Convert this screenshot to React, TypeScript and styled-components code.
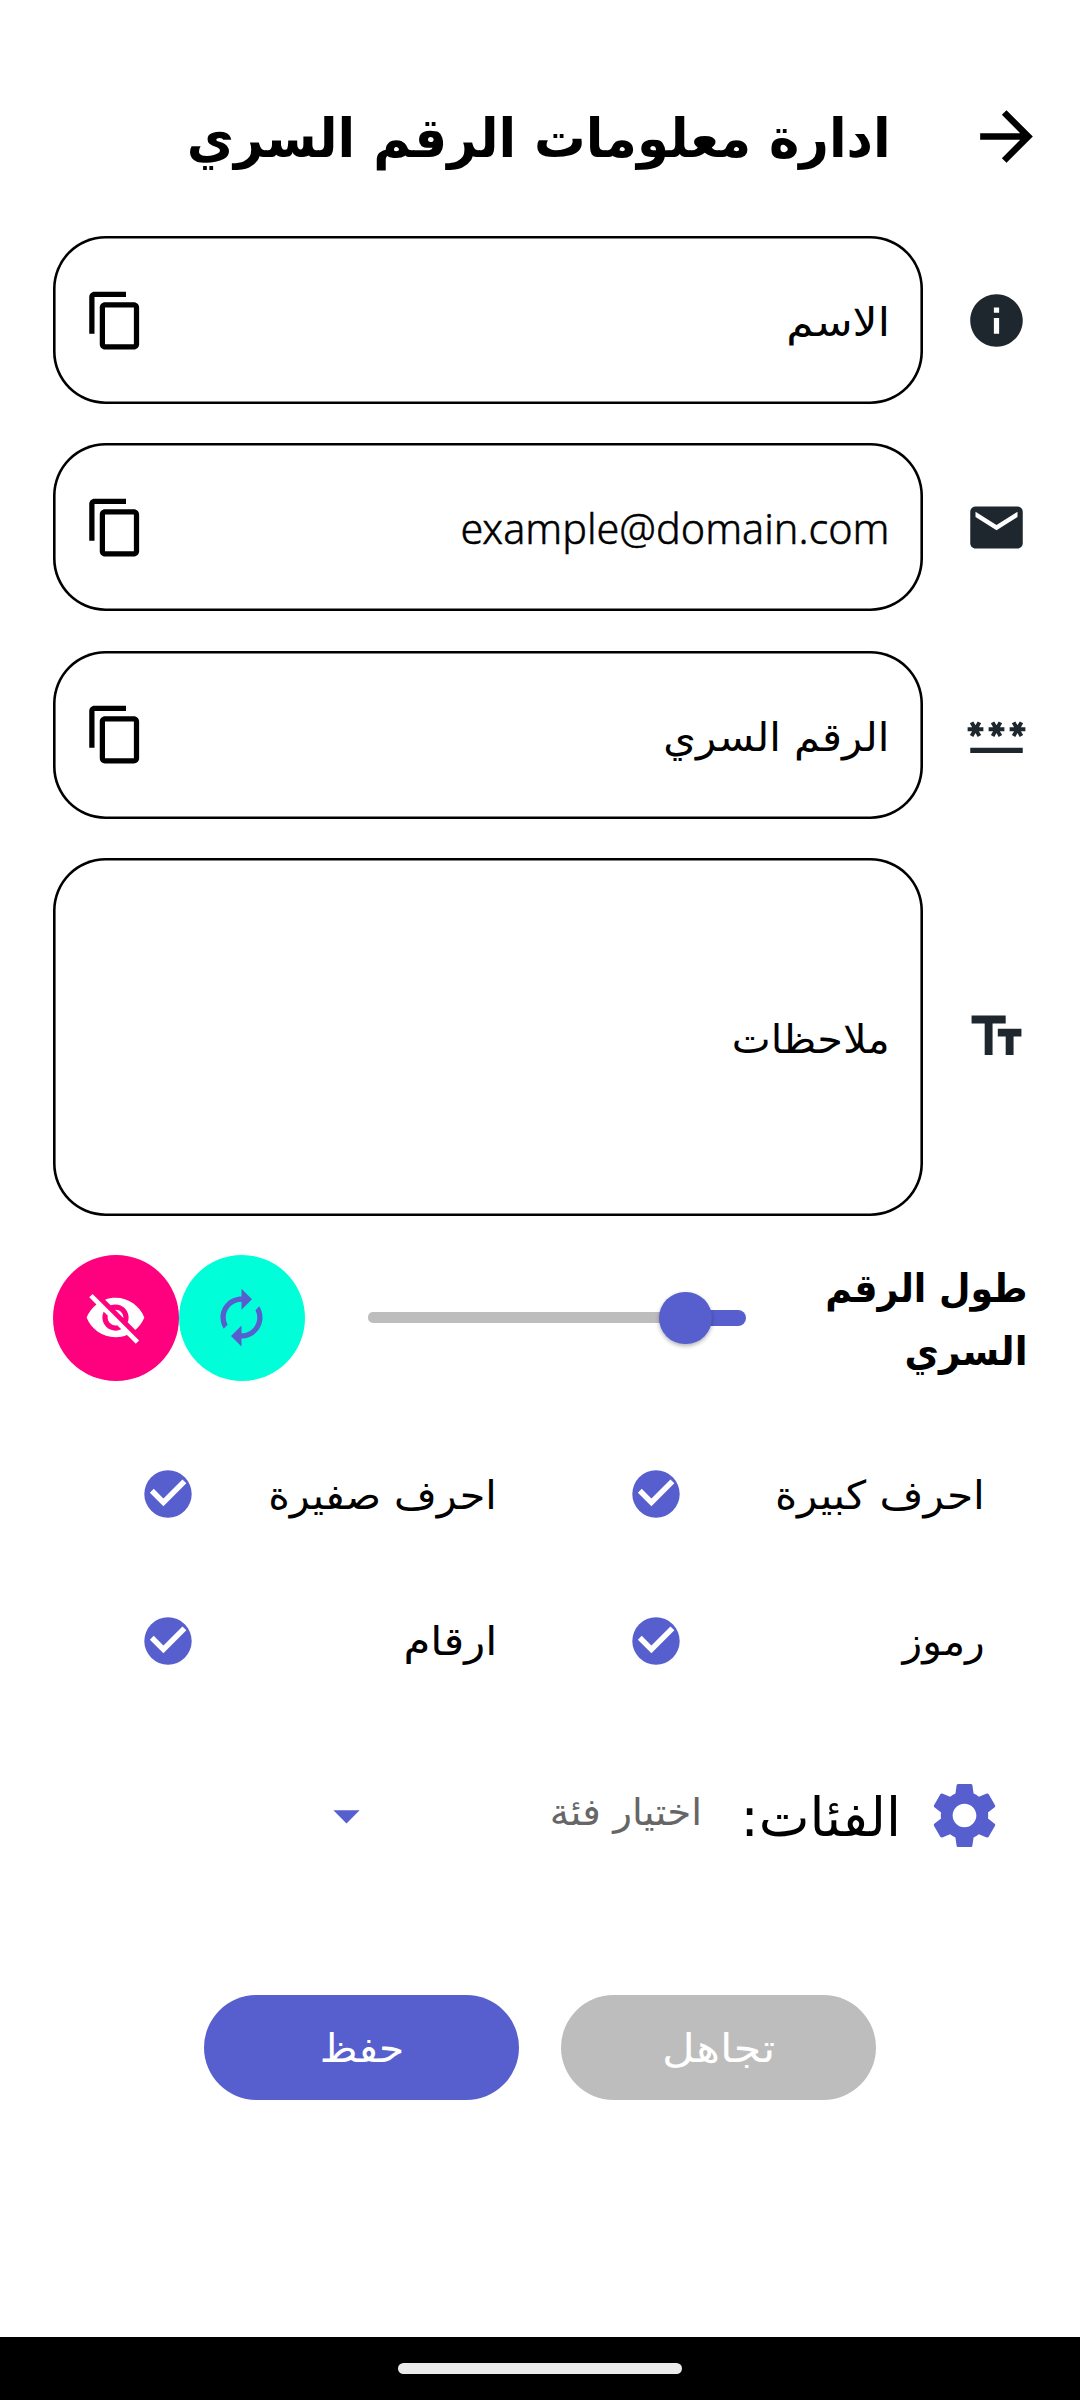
import React from 'react';
import styled, { createGlobalStyle } from 'styled-components';
import {
  MdArrowDropDown,
  MdArrowForward,
  MdAutorenew,
  MdContentCopy,
  MdEmail,
  MdInfo,
  MdPassword,
  MdSettings,
  MdTextFields,
  MdVisibilityOff,
} from 'react-icons/md';

const color = {
  accent: '#575fcf',
  pink: '#ff007f',
  mint: '#00ffd9',
  ink: '#1e272e',
  grey: '#bdbdbd',
  page: '#ffffff',
};

const GlobalStyle = createGlobalStyle`
  html, body { margin: 0; padding: 0; background: ${color.page}; }
  *, *::before, *::after { box-sizing: border-box; }
  svg { display: block; flex: none; }
`;

const Screen = styled.div`
  width: 1080px;
  height: 2400px;
  display: flex;
  flex-direction: column;
  overflow: hidden;
  direction: rtl;
  background: ${color.page};
  color: #000;
  font-family: 'DejaVu Sans', sans-serif;
`;

/* A single line of text; $stretch adjusts the glyph width, $drop the baseline. */
const Line = styled.span<{
  $size?: number;
  $bold?: boolean;
  $stretch?: number;
  $drop?: number;
  $centered?: boolean;
  $tone?: string;
}>`
  display: block;
  flex: none;
  margin: 0;
  white-space: nowrap;
  font-size: ${(p) => p.$size ?? 39.5}px;
  font-weight: ${(p) => (p.$bold ? 700 : 400)};
  line-height: 63px;
  color: ${(p) => p.$tone ?? 'inherit'};
  transform: translateY(${(p) => p.$drop ?? 0}px) scaleX(${(p) => p.$stretch ?? 1});
  transform-origin: ${(p) => (p.$centered ? 'center' : 'right')} center;
`;

const Latin = styled(Line)`
  font-family: 'Noto Sans', sans-serif;
  font-weight: 300;
  direction: ltr;
  -webkit-text-stroke: 0.5px currentColor;
`;

const TopBar = styled.header`
  height: 210px;
  padding: 63px 34px 0 52px;
  display: flex;
  align-items: center;
  gap: 76px;
`;

const Fields = styled.section`
  display: flex;
  flex-direction: column;
  gap: 39.4px;
  padding: 26px 52.5px 0;
`;

const FieldRow = styled.div`
  display: flex;
  align-items: center;
  gap: 42px;
  color: ${color.ink};
`;

const FieldBox = styled.div<{ $tall?: boolean }>`
  flex: 1;
  height: ${(p) => (p.$tall ? 357.4 : 168)}px;
  padding: 0 33px 0 31.5px;
  display: flex;
  align-items: center;
  justify-content: space-between;
  border-radius: 52.5px;
  box-shadow: inset 0 0 0 2.6px #000;
  color: #000;
`;

const LengthRow = styled.section`
  display: flex;
  align-items: center;
  height: 126px;
  margin-top: 39.2px;
  padding: 0 52.5px;
`;

const LengthLabel = styled.div`
  width: 218.5px;
`;

const Slider = styled.div`
  position: relative;
  display: flex;
  align-items: center;
  width: 378.5px;
  height: 63px;
  margin: 0 63px;
`;

const TrackActive = styled.div`
  height: 16px;
  border-radius: 0 8px 8px 0;
  background: ${color.accent};
`;

const TrackRest = styled.div`
  flex: 1;
  height: 11px;
  border-radius: 5px 0 0 5px;
  background: ${color.grey};
`;

const Thumb = styled.div`
  position: absolute;
  width: 52.5px;
  height: 52.5px;
  margin-right: -26.25px;
  border-radius: 50%;
  background: ${color.accent};
  box-shadow: 0 2px 4px rgba(0, 0, 0, 0.3);
`;

const RoundButton = styled.button<{ $fill: string; $tint: string }>`
  width: 126px;
  height: 126px;
  padding: 0;
  border: 0;
  border-radius: 50%;
  display: grid;
  place-items: center;
  background: ${(p) => p.$fill};
  color: ${(p) => p.$tint};
`;

const Options = styled.section`
  display: grid;
  grid-template-columns: 1fr 1fr;
  grid-auto-rows: 146.6px;
  margin-top: 40px;
  padding: 0 52.5px;
`;

const Option = styled.label`
  display: flex;
  align-items: center;
  justify-content: space-between;
  padding: 0 43px 0 91.5px;
`;

const CategoryRow = styled.section`
  display: flex;
  align-items: center;
  height: 204px;
  padding-right: 76px;
  color: ${color.accent};
`;

const CategoryTitle = styled.div`
  margin: 0 24px 0 38px;
  color: #000;
`;

const Select = styled.div`
  width: 387px;
  display: flex;
  align-items: center;
  justify-content: space-between;
`;

const Actions = styled.section`
  display: flex;
  justify-content: center;
  gap: 42px;
  margin-top: 77px;
`;

const PillButton = styled.button<{ $fill: string }>`
  width: 315px;
  height: 105px;
  padding: 0;
  border: 0;
  border-radius: 52.5px;
  display: flex;
  align-items: center;
  justify-content: center;
  font-family: inherit;
  color: #fff;
  background: ${(p) => p.$fill};
`;

const NavBar = styled.footer`
  display: flex;
  align-items: center;
  justify-content: center;
  height: 63px;
  margin-top: auto;
  background: #000;
`;

const NavHandle = styled.div`
  width: 284px;
  height: 11px;
  border-radius: 5.5px;
  background: #ebebeb;
`;

const CheckMark = () => (
  <svg width="48" height="48" viewBox="0 0 48 48">
    <circle cx="24" cy="24" r="23.7" fill={color.accent} />
    <polyline
      points="7.8,20.8 19.4,32.4 40.4,11.4"
      fill="none"
      stroke="#fff"
      strokeWidth="5.5"
    />
  </svg>
);

const options = [
  { label: 'احرف كبيرة', stretch: 1.072 },
  { label: 'احرف صفيرة', stretch: 1.045 },
  { label: 'رموز', stretch: 1.03 },
  { label: 'ارقام', stretch: 1.1 },
];

const sliderFraction = 0.16;

export default function App() {
  const position = `${sliderFraction * 100}%`;
  return (
    <Screen>
      <GlobalStyle />
      <TopBar>
        <MdArrowForward size={79} />
        <Line as="h1" $size={54.5} $bold $stretch={0.944} $drop={1.5}>
          ادارة معلومات الرقم السري
        </Line>
      </TopBar>

      <Fields>
        <FieldRow>
          <MdInfo size={63} />
          <FieldBox>
            <Line $stretch={1.115} $drop={2}>الاسم</Line>
            <MdContentCopy size={63} />
          </FieldBox>
        </FieldRow>
        <FieldRow>
          <MdEmail size={63} />
          <FieldBox>
            <Latin $size={41.3} $drop={1}>example@domain.com</Latin>
            <MdContentCopy size={63} />
          </FieldBox>
        </FieldRow>
        <FieldRow>
          <MdPassword size={63} />
          <FieldBox>
            <Line $stretch={1.06} $drop={2.5}>الرقم السري</Line>
            <MdContentCopy size={63} />
          </FieldBox>
        </FieldRow>
        <FieldRow>
          <MdTextFields size={63} />
          <FieldBox $tall>
            <Line $stretch={1.048} $drop={2.5}>ملاحظات</Line>
          </FieldBox>
        </FieldRow>
      </Fields>

      <LengthRow>
        <LengthLabel>
          <Line $bold $stretch={0.92} $drop={1.5}>طول الرقم</Line>
          <Line $bold $stretch={0.95} $drop={1.5}>السري</Line>
        </LengthLabel>
        <Slider>
          <TrackActive style={{ width: position }} />
          <TrackRest />
          <Thumb style={{ right: position }} />
        </Slider>
        <RoundButton $fill={color.mint} $tint={color.accent}>
          <MdAutorenew size={63} />
        </RoundButton>
        <RoundButton $fill={color.pink} $tint="#fff">
          <MdVisibilityOff size={63} />
        </RoundButton>
      </LengthRow>

      <Options>
        {options.map((option) => (
          <Option key={option.label}>
            <Line $stretch={option.stretch} $drop={1}>{option.label}</Line>
            <CheckMark />
          </Option>
        ))}
      </Options>

      <CategoryRow>
        <MdSettings size={79} />
        <CategoryTitle>
          <Line $size={54} $drop={2}>الفئات:</Line>
        </CategoryTitle>
        <Select>
          <Line $size={37} $stretch={1.05} $drop={-3} $tone="#666">اختيار فئة</Line>
          <MdArrowDropDown size={63} />
        </Select>
      </CategoryRow>

      <Actions>
        <PillButton $fill={color.grey}>
          <Line $centered $stretch={1.14} $drop={0.5}>تجاهل</Line>
        </PillButton>
        <PillButton $fill={color.accent}>
          <Line $centered $stretch={1.03} $drop={0.5}>حفظ</Line>
        </PillButton>
      </Actions>

      <NavBar>
        <NavHandle />
      </NavBar>
    </Screen>
  );
}
